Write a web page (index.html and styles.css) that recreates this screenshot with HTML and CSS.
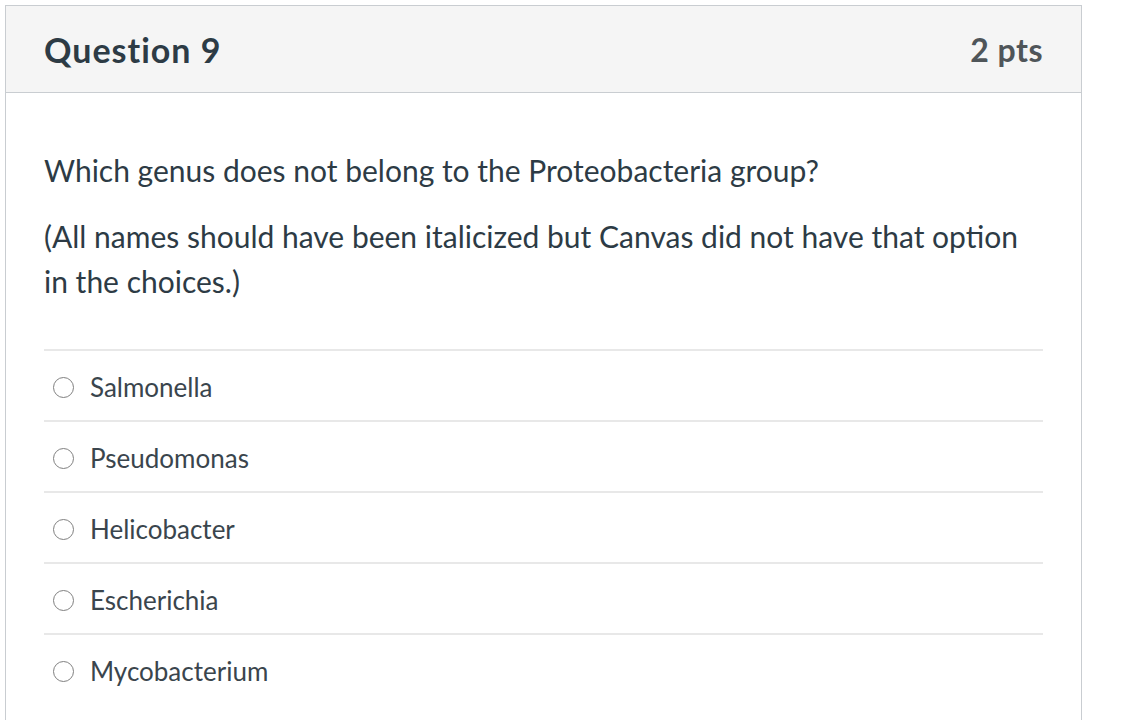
FILE: index.html
```html
<!DOCTYPE html>
<html>
<head>
<meta charset="utf-8">
<link rel="stylesheet" href="styles.css">
</head>
<body>
<div class="card">
  <div class="header">
    <h2 class="title">Question 9</h2>
    <span class="pts">2 pts</span>
  </div>
  <div class="content">
    <p class="text">Which genus does not belong to the Proteobacteria group?</p>
    <p class="text second">(All names should have been italicized but Canvas did not have that option in the choices.)</p>
    <div class="answers">
      <label class="answer"><span class="radio"></span><span class="label">Salmonella</span></label>
      <label class="answer"><span class="radio"></span><span class="label">Pseudomonas</span></label>
      <label class="answer"><span class="radio"></span><span class="label">Helicobacter</span></label>
      <label class="answer"><span class="radio"></span><span class="label">Escherichia</span></label>
      <label class="answer"><span class="radio"></span><span class="label">Mycobacterium</span></label>
    </div>
  </div>
</div>
</body>
</html>
```
FILE: styles.css
```css
html, body {
  margin: 0;
  padding: 0;
  background: #ffffff;
  font-family: Lato, "Open Sans", sans-serif;
  color: #2d3b45;
}
body {
  padding: 5px 0 0 5px;
  height: 720px;
  overflow: hidden;
  box-sizing: border-box;
}
.card {
  width: 1077px;
  box-sizing: border-box;
  border: 1px solid #c9cdd1;
  border-bottom: none;
  min-height: 760px;
}
.header {
  height: 86px;
  background: #f5f5f5;
  border-bottom: 1px solid #c9cdd1;
  display: flex;
  align-items: center;
  justify-content: space-between;
  padding: 0 38px 0 38px;
}
.title {
  margin: 0;
  font-size: 34px;
  font-weight: 700;
  color: #2d3b45;
  letter-spacing: 1px;
}
.pts {
  font-size: 32px;
  font-weight: 700;
  color: #4f5559;
  letter-spacing: 0.5px;
}
.content {
  padding: 55px 38px 0 38px;
}
.text {
  margin: 0;
  font-size: 30px;
  line-height: 45px;
  color: #2d3b45;
}
.text.second {
  margin-top: 21px;
}
.answers {
  margin-top: 45px;
}
.answer {
  display: flex;
  align-items: center;
  height: 71px;
  border-top: 2px solid #e8e8e8;
  box-sizing: border-box;
  padding: 2px 0 0 9px;
}
.radio {
  width: 21px;
  height: 21px;
  border: 1.5px solid #808080;
  border-radius: 50%;
  box-sizing: border-box;
  flex: none;
  margin-top: 2px;
}
.label {
  margin-left: 16px;
  font-size: 26px;
  color: #3a454d;
}
```
